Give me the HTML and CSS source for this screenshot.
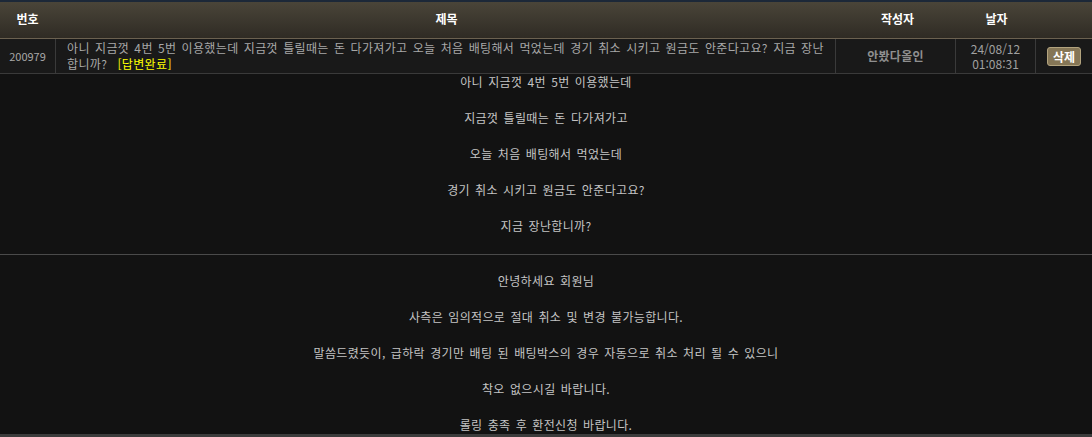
FILE: index.html
```html
<!DOCTYPE html>
<html lang="ko">
<head>
<meta charset="utf-8">
<link rel="stylesheet" href="styles.css">
</head>
<body>
<div class="board">
  <div class="head">
    <div class="c-no">번호</div>
    <div class="c-title">제목</div>
    <div class="c-writer">작성자</div>
    <div class="c-date">날자</div>
    <div class="c-act"></div>
  </div>
  <div class="row">
    <div class="c-no num">200979</div>
    <div class="c-title subj">아니 지금껏 4번 5번 이용했는데 지금껏 틀릴때는 돈 다가져가고 오늘 처음 배팅해서 먹었는데 경기 취소 시키고 원금도 안준다고요? 지금 장난합니까? <span class="done">[답변완료]</span></div>
    <div class="c-writer name">안봤다올인</div>
    <div class="c-date date">24/08/12<br>01:08:31</div>
    <div class="c-act"><span class="del">삭제</span></div>
  </div>
  <div class="content question">
    <p>아니 지금껏 4번 5번 이용했는데</p>
    <p>지금껏 틀릴때는 돈 다가져가고</p>
    <p>오늘 처음 배팅해서 먹었는데</p>
    <p>경기 취소 시키고 원금도 안준다고요?</p>
    <p>지금 장난합니까?</p>
  </div>
  <div class="content answer">
    <p>안녕하세요 회원님</p>
    <p>사측은 임의적으로 절대 취소 및 변경 불가능합니다.</p>
    <p>말씀드렸듯이, 급하락 경기만 배팅 된 배팅박스의 경우 자동으로 취소 처리 될 수 있으니</p>
    <p>착오 없으시길 바랍니다.</p>
    <p>롤링 충족 후 환전신청 바랍니다.</p>
  </div>
  <div class="foot"></div>
</div>
</body>
</html>
```
FILE: styles.css
```css
html, body {
  margin: 0;
  padding: 0;
  background: #121212;
  font-family: "Noto Sans CJK KR", "Liberation Sans", sans-serif;
  font-size: 12px;
  color: #bbb;
}
.board {
  width: 1092px;
  height: 437px;
  overflow: hidden;
  display: flex;
  flex-direction: column;
}
.head {
  display: flex;
  flex: none;
  height: 36px;
  border-top: 2px solid #1c2838;
  border-bottom: 1px solid #6b6150;
  background: linear-gradient(#4a4539, #2f2b24);
  color: #fff;
  font-weight: bold;
  font-size: 12px;
  align-items: center;
}
.head > div {
  text-align: center;
  padding-bottom: 3px;
}
.c-no { width: 55px; flex: none; text-align: center; }
.c-title { flex: 1; }
.c-writer { width: 119px; flex: none; text-align: center; }
.c-date { width: 79px; flex: none; text-align: center; }
.c-act { width: 56px; flex: none; text-align: center; }
.row {
  display: flex;
  flex: none;
  height: 34px;
  background: #191919;
  border-bottom: 1px solid #3a3a3a;
}
.row > div {
  border-right: 1px solid #3a3a3a;
  display: flex;
  align-items: center;
  justify-content: center;
  color: #a8a8a8;
}
.row > div:last-child { border-right: none; }
.num { font-size: 11px; color: #999; }
.row .subj {
  display: block;
  text-align: left;
  padding: 1px 4px 0 11px;
  line-height: 16px;
  letter-spacing: 0.35px;
  word-spacing: 1.5px;
  color: #a8a8a8;
}
.done {
  display: inline-block;
  height: 16px;
  line-height: 16px;
  overflow: hidden;
  vertical-align: top;
  margin-left: 5px;
  color: #ffff00;
}
.row .name { font-weight: bold; color: #8f8f8f; font-size: 12px; padding-bottom: 2px; letter-spacing: 0.3px; }
.row .date { flex-direction: column; line-height: 15px; color: #a0a0a0; }
.del {
  display: inline-block;
  background: #857656;
  border: 1px solid #b2a37e;
  border-radius: 3px;
  color: #fff;
  font-weight: bold;
  padding: 1px 5px 1px;
  line-height: 15px;
}
.content {
  flex: none;
  text-align: center;
  color: #c4c4c4;
  letter-spacing: 0.35px;
  word-spacing: 1.5px;
}
.content p {
  margin: 0 0 21px;
  line-height: 15px;
}
.question {
  border-bottom: 1px solid #4a4a4a;
}
.answer {
  padding-top: 18px;
  flex: 1;
}
.answer p:last-child { margin-bottom: 0; }
.foot {
  height: 3px;
  background: #3c3c3c;
  flex: none;
}
```
